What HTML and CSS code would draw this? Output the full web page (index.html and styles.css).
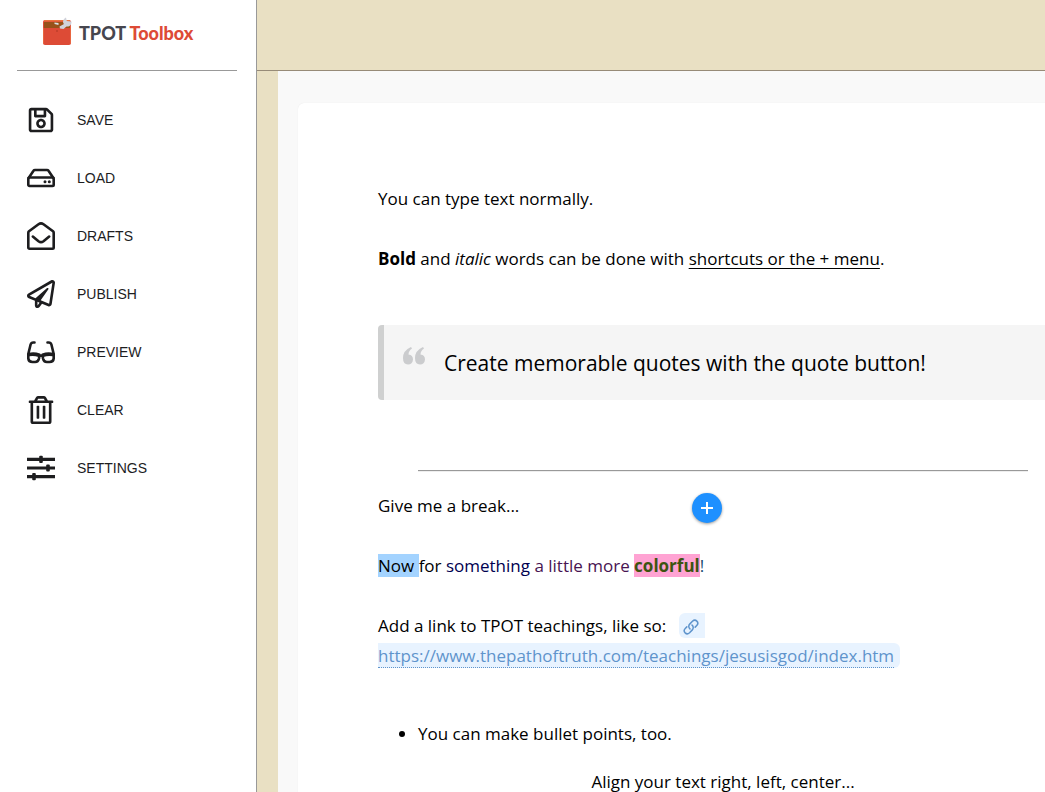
FILE: index.html
```html
<!DOCTYPE html>
<html lang="en">
<head>
<meta charset="utf-8">
<title>TPOT Toolbox</title>
<link rel="stylesheet" href="styles.css">
</head>
<body>
<div class="app">
  <aside class="sidebar">
    <div class="brand">
      <svg class="brand-icon" viewBox="0 0 30 30" aria-hidden="true">
        <rect x="1" y="3" width="28" height="25" rx="2" fill="#dd4b36"/>
        <path d="M2 5h26v6H2z" fill="#98521a"/>
        <path d="M2 3.700h26" stroke="#ea7440" stroke-width="1.400"/>
        <path d="M1.500 11v15.500M28.500 9v17.500" stroke="#e86540"/>
        <path d="M17.500 9.500l4.500-2.500c-2-2-.5-5.500 2-6.500l.8 3.500 4.700.5c.3 3.500-2 5.500-5 5l-3 2.500-3.500-.5z" fill="#d0d2da"/>
        <path d="M12.500 5.500l4 .5v2l-4-1z" fill="#dbe3e6"/>
        <circle cx="15" cy="14" r=".7" fill="#9e3020"/>
      </svg>
      <span class="brand-name">TPOT <span class="brand-accent">Toolbox</span></span>
    </div>
    <nav class="menu">
      <button class="menu-item" type="button">
        <svg class="menu-icon" viewBox="-32 0 512 512" fill="currentColor" aria-hidden="true"><path d="M433.941 129.941l-83.882-83.882A48 48 0 0 0 316.118 32H48C21.490 32 0 53.490 0 80v352c0 26.510 21.490 48 48 48h352c26.510 0 48-21.490 48-48V163.882a48 48 0 0 0-14.059-33.941zM272 80v80H144V80h128zm122 352H54a6 6 0 0 1-6-6V86a6 6 0 0 1 6-6h42v104c0 13.255 10.745 24 24 24h176c13.255 0 24-10.745 24-24V83.882l78.243 78.243a6 6 0 0 1 1.757 4.243V426a6 6 0 0 1-6 6zM224 232c-48.523 0-88 39.477-88 88s39.477 88 88 88 88-39.477 88-88-39.477-88-88-88zm0 128c-22.056 0-40-17.944-40-40s17.944-40 40-40 40 17.944 40 40-17.944 40-40 40z"/></svg>
        <span>SAVE</span>
      </button>
      <button class="menu-item" type="button">
        <svg class="menu-icon" viewBox="0 0 28 28" fill="none" stroke="currentColor" stroke-width="2.600" stroke-linejoin="round" aria-hidden="true"><path d="M1.300 14.500L6.500 6.800Q7 6 8 6h12q1 0 1.500.8l5.200 7.700"/><rect x="1.300" y="13.500" width="25.400" height="8.500" rx="1.200"/><circle cx="18" cy="17.800" r="1.500" fill="currentColor" stroke="none"/><circle cx="22.300" cy="17.800" r="1.500" fill="currentColor" stroke="none"/></svg>
        <span>LOAD</span>
      </button>
      <button class="menu-item" type="button">
        <svg class="menu-icon" viewBox="0 0 28 28" fill="none" stroke="currentColor" stroke-width="2.600" stroke-linejoin="round" stroke-linecap="round" aria-hidden="true"><path d="M1.300 10.800Q1.300 9.900 2 9.300L11.500 2.200Q14 .5 16.500 2.200L26 9.300q.7.600.7 1.500V25.500q0 1.200-1.200 1.200H2.500q-1.200 0-1.200-1.200z"/><path d="M5.800 14.600l5.700 4.700q2.500 1.800 5 0l5.700-4.700"/></svg>
        <span>DRAFTS</span>
      </button>
      <button class="menu-item" type="button">
        <svg class="menu-icon" viewBox="0 0 512 512" fill="currentColor" aria-hidden="true"><path d="M440 6.500L24 246.400c-34.400 19.900-31.100 70.800 5.700 85.900L144 379.600V464c0 46.400 59.200 65.500 86.600 28.600l43.800-59.100 111.900 46.200c5.900 2.400 12.100 3.600 18.300 3.600 8.200 0 16.300-2.100 23.600-6.200 12.800-7.200 21.600-20 23.900-34.500l59.400-387.200c6.100-40.100-36.900-68.800-71.500-48.900zM192 464v-64.600l36.600 15.100L192 464zm212.600-28.700l-153.800-63.500L391 169.500c10.700-15.500-9.500-33.500-23.700-21.200L155.800 332.600 48 288 464 48l-59.400 387.300z"/></svg>
        <span>PUBLISH</span>
      </button>
      <button class="menu-item" type="button">
        <svg class="menu-icon" viewBox="0 0 28 28" fill="none" stroke="currentColor" stroke-width="2.600" stroke-linecap="round" stroke-linejoin="round" aria-hidden="true"><path d="M7.500 4.500H6.300Q4.200 4.500 3.600 6.500L1.300 16M20.500 4.500h1.200q2.100 0 2.700 2L26.700 16"/><path d="M1.300 16.500q5.200-1.800 11.200.3l-.5 3.700q-.8 3.500-3.800 3.500H5.500q-3.800 0-4.200-3.500zM26.700 16.500q-5.200-1.800-11.200.3l.5 3.700q.8 3.500 3.800 3.500h2.700q3.800 0 4.200-3.500z"/><path d="M2 17q5-1 10 .8h4q5-1.800 10-.8"/></svg>
        <span>PREVIEW</span>
      </button>
      <button class="menu-item" type="button">
        <svg class="menu-icon" viewBox="-32 0 512 512" fill="currentColor" aria-hidden="true"><path d="M268 416h24a12 12 0 0 0 12-12V188a12 12 0 0 0-12-12h-24a12 12 0 0 0-12 12v216a12 12 0 0 0 12 12zM432 80h-82.410l-34-56.700A48 48 0 0 0 274.410 0H173.590a48 48 0 0 0-41.160 23.300L98.410 80H16A16 16 0 0 0 0 96v16a16 16 0 0 0 16 16h16v336a48 48 0 0 0 48 48h288a48 48 0 0 0 48-48V128h16a16 16 0 0 0 16-16V96a16 16 0 0 0-16-16zM171.840 50.910A6 6 0 0 1 177 48h94a6 6 0 0 1 5.150 2.910L293.610 80H154.390zM368 464H80V128h288zm-212-48h24a12 12 0 0 0 12-12V188a12 12 0 0 0-12-12h-24a12 12 0 0 0-12 12v216a12 12 0 0 0 12 12z"/></svg>
        <span>CLEAR</span>
      </button>
      <button class="menu-item" type="button">
        <svg class="menu-icon" viewBox="0 0 28 28" fill="currentColor" aria-hidden="true"><path d="M0 3.700h28v3.200H0zM0 12.400h28v3.200H0zM0 21.100h28v3.200H0z"/><rect x="12.200" y="1.700" width="3.600" height="7.200" rx="1"/><rect x="19.200" y="10.400" width="3.600" height="7.200" rx="1"/><rect x="5.200" y="19.100" width="3.600" height="7.200" rx="1"/></svg>
        <span>SETTINGS</span>
      </button>
    </nav>
  </aside>
  <div class="workspace">
    <header class="toolbar"></header>
    <main class="desk">
      <article class="paper">
        <p>You can type text normally.</p>
        <p><strong>Bold</strong> and <em>italic</em> words can be done with <u>shortcuts or the + menu</u>.</p>
        <blockquote class="quote">
          <svg class="quote-icon" viewBox="0 0 22 18" fill="currentColor" aria-hidden="true"><path d="M8 0l1 1.500Q5.500 4 5.500 7.500Q10 8 10 12.500Q9.500 17.500 5 17.500Q0 17.500 0 11Q0 3.500 8 0z"/><path d="M20 0l1 1.500Q17.500 4 17.500 7.500Q22 8 22 12.500Q21.500 17.500 17 17.500Q12 17.500 12 11Q12 3.500 20 0z"/></svg>
          <span>Create memorable quotes with the quote button!</span>
        </blockquote>
        <hr class="rule">
        <p>Give me a break...</p>
        <p><span class="mark-blue">Now </span>for <span class="navy">something</span> <span class="purple">a little more</span> <strong class="mark-pink">colorful</strong><span class="steel">!</span></p>
        <p>Add a link to TPOT teachings, like so: <a class="link" href="https://www.thepathoftruth.com/teachings/jesusisgod/index.htm"><svg class="link-icon" viewBox="0 0 512 512" fill="none" stroke="currentColor" stroke-width="48" stroke-linecap="round" aria-hidden="true"><path d="M222 318c-48-42-50-110-8-154l88-90c44-42 104-42 140-6 40 42 38 102-2 142l-50 50"/><path d="M290 194c48 42 50 110 8 154l-88 90c-44 42-104 42-140 6-40-42-38-102 2-142l50-50"/></svg> <span class="link-text">https://www.thepathoftruth.com/teachings/jesusisgod/index.htm</span></a></p>
        <ul class="list"><li>You can make bullet points, too.</li></ul>
        <p class="centered">Align your text right, left, center...</p>
      </article>
      <button class="add" type="button" aria-label="Add block">
        <svg class="add-icon" viewBox="0 0 12 12" aria-hidden="true"><path d="M6 0v12M0 6h12" stroke="currentColor" stroke-width="2"/></svg>
      </button>
    </main>
  </div>
</div>
</body>
</html>
```
FILE: styles.css
```css
* { box-sizing: border-box; }

body {
  margin: 0;
  background: #fff;
  color: #000;
  font-family: "Open Sans", "Noto Sans", sans-serif;
}

.app {
  display: flex;
  height: 100vh;
  overflow: hidden;
}

.sidebar {
  flex: none;
  width: 257px;
  border-right: 1px solid #999;
}

.brand {
  display: flex;
  align-items: center;
  gap: 7px;
  height: 71px;
  margin: 0 19px 0 17px;
  padding: 0 0 6px 25px;
  border-bottom: 1px solid #999;
}

.brand-icon { width: 30px; height: 30px; }

.brand-name {
  padding-top: 2px;
  color: #46464e;
  font: 900 18px/24px Lato, sans-serif;
}

.brand-accent { color: #dd4b36; }

.menu {
  display: flex;
  flex-direction: column;
  padding-top: 20px;
}

.menu-item {
  display: flex;
  align-items: center;
  gap: 22px;
  height: 58px;
  padding: 0 27px;
  border: 0;
  background: none;
  color: #1d1d1f;
  font: 14px/20px "Liberation Sans", Arial, sans-serif;
  text-align: left;
}

.menu-icon { width: 28px; height: 28px; }

.workspace {
  display: flex;
  flex: 1;
  flex-direction: column;
  min-width: 0;
}

.toolbar {
  flex: none;
  height: 71px;
  border-bottom: 1px solid #978b78;
  background: #e9e0c3;
}

.desk {
  position: relative;
  flex: 1;
  min-height: 0;
  overflow: hidden;
  padding: 32px 20px;
  border-left: 21px solid #e9e0c3;
  background: #f9f9f9;
}

.paper {
  width: 850px;
  min-height: 1100px;
  padding: 81px 80px;
  border-radius: 6px;
  background: #fff;
  box-shadow: 0 0 1px rgba(0, 0, 0, .1);
  font-size: 17px;
  line-height: 30px;
}

.paper p { margin: 0 0 30px; }

.paper u {
  text-decoration-thickness: 1px;
  text-underline-offset: 3px;
}

.quote {
  display: flex;
  align-items: center;
  gap: 19px;
  min-height: 75px;
  margin: 51px 0 70px;
  padding: 0 19px;
  border-left: 6px solid #cfd0d0;
  border-radius: 4px;
  background: #f5f5f5;
  font-size: 21px;
}

.quote-icon {
  width: 22px;
  height: 18px;
  margin-bottom: 14px;
  color: #cbccce;
}

.rule {
  margin: 0 40px 19px;
  border: 0;
  border-top: 1px solid #999;
  border-bottom: 1px solid #eee;
}

.mark-blue { background: #a3d3ff; }
.navy { color: #000050; }
.purple { color: #481452; }
.mark-pink { background: #ffa3d3; color: #3c5410; }
.steel { color: #204c70; }

.link {
  margin-left: 8px;
  padding: 1px 6px 1px 4px;
  border-radius: 6px;
  background: #e8f3ff;
  color: #5f94cc;
  text-decoration: none;
}

.link-icon {
  width: 16px;
  height: 16px;
  margin-right: 6px;
  vertical-align: -3px;
}

.link-text { border-bottom: 1px dotted #5f94cc; }

.list {
  margin: 48px 0 18px;
  padding-left: 40px;
}

.centered { text-align: center; }

.add {
  position: absolute;
  top: 422px;
  left: 414px;
  display: flex;
  align-items: center;
  justify-content: center;
  width: 30px;
  height: 30px;
  padding: 0;
  border: 0;
  border-radius: 50%;
  background: #1e90ff;
  color: #fff;
  box-shadow: 0 1px 3px rgba(0, 0, 0, .4);
}

.add-icon { width: 12px; height: 12px; }
```
